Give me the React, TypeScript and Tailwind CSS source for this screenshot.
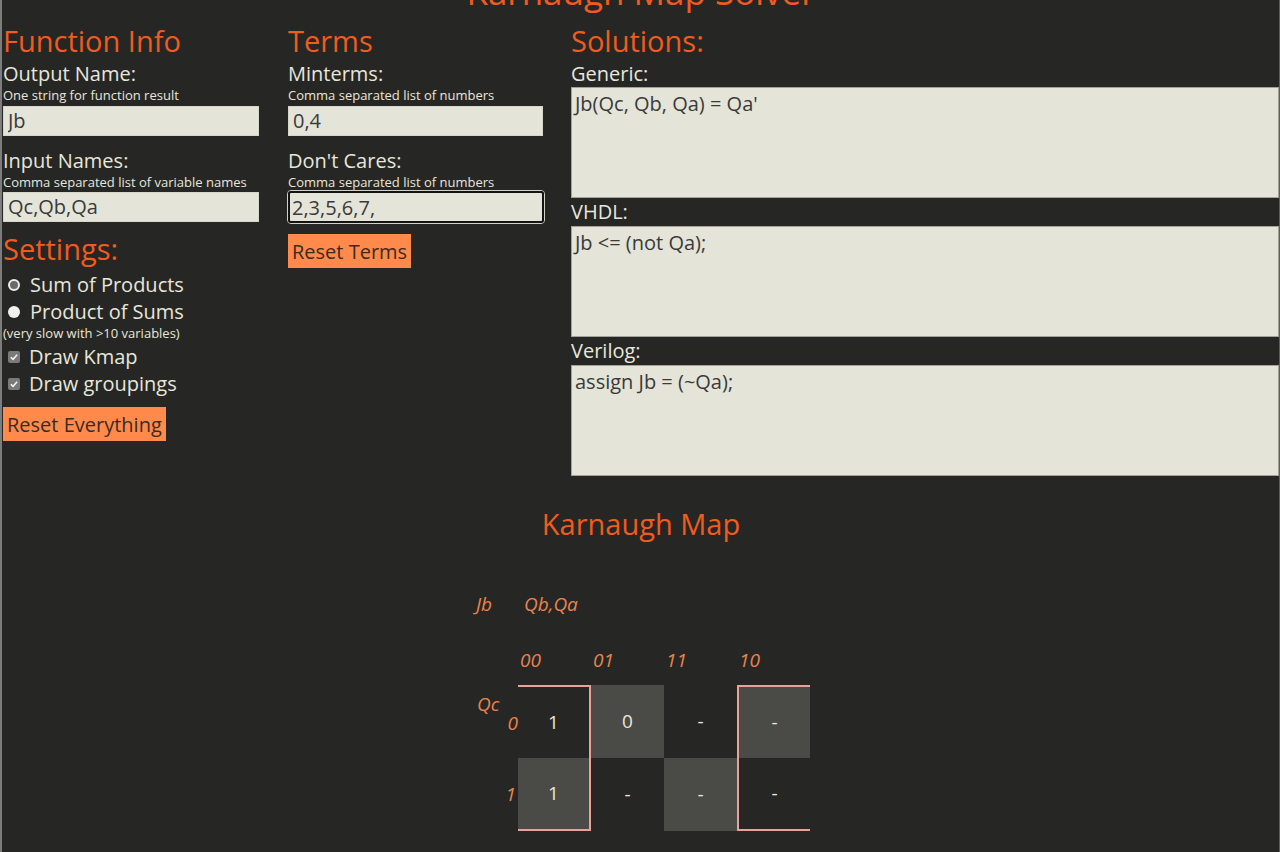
import React from 'react';

type Cell = { v: string; shade?: boolean; edge?: string };

const kmapRows: { label: string; cells: Cell[] }[] = [
  {
    label: '0',
    cells: [
      { v: '1', edge: 'border-t-2 border-r-2' },
      { v: '0', shade: true },
      { v: '-' },
      { v: '-', shade: true, edge: 'border-t-2 border-l-2' },
    ],
  },
  {
    label: '1',
    cells: [
      { v: '1', shade: true, edge: 'border-r-2 border-b-2' },
      { v: '-' },
      { v: '-', shade: true },
      { v: '-', edge: 'border-l-2 border-b-2' },
    ],
  },
];

function Heading({ children, className = '' }: { children: React.ReactNode; className?: string }) {
  return <h2 className={`text-[29px] leading-[38px] text-[#f15b1e] ${className}`}>{children}</h2>;
}

function Label({ children, className = '' }: { children: React.ReactNode; className?: string }) {
  return <div className={`text-[20px] leading-[27px] ${className}`}>{children}</div>;
}

function Hint({ children }: { children: React.ReactNode }) {
  return <div className="text-[13px] leading-[16px]">{children}</div>;
}

function TextBox({ value, width, className = '' }: { value: string; width: string; className?: string }) {
  return (
    <input
      readOnly
      value={value}
      className={`${width} h-[30px] border border-[#d6d6ca] bg-[#e4e4d8] px-[4px] text-[20px] text-[#3a3a3a] outline-none ${className}`}
    />
  );
}

function Button({ children, className = '' }: { children: React.ReactNode; className?: string }) {
  return (
    <button className={`h-[34px] bg-[#ff8a4c] px-[4px] text-[20px] leading-[27px] text-[#3b2a20] ${className}`}>
      {children}
    </button>
  );
}

function CheckRow({ label }: { label: string }) {
  return (
    <div className="flex items-center text-[20px] leading-[27px]">
      <span className="ml-[5px] mr-[9px] flex h-[12px] w-[12px] items-center justify-center rounded-[2px] bg-[#7a7a7a]">
        <svg viewBox="0 0 12 12" className="h-[10px] w-[10px]">
          <path d="M2.2 6.3 L4.8 8.8 L9.8 3.2" fill="none" stroke="#f4f4f4" strokeWidth="1.8" />
        </svg>
      </span>
      {label}
    </div>
  );
}

function Solution({ label, text, first }: { label: string; text: string; first?: boolean }) {
  return (
    <>
      <div className={`text-[20px] ${first ? 'leading-[27px]' : 'leading-[28px]'}`}>{label}</div>
      <textarea
        readOnly
        value={text}
        className="block h-[111px] w-full resize-none border border-[#a2a298] bg-[#e4e4d8] px-[3px] py-[2px] text-[20px] leading-[27px] text-[#3a3a3a] outline-none"
      />
    </>
  );
}

export default function App() {
  return (
    <div className="h-[852px] overflow-hidden border-l-2 border-r border-l-[#7c7c7c] border-r-[#5e5e5e] bg-[#262624] pl-[1px] font-['Open_Sans',sans-serif] text-[#e7e7dc]">
      <h1 className="-mt-[31px] text-center text-[35px] leading-[46px] text-[#f15b1e]">Karnaugh Map Solver</h1>

      <div className="mt-[7px] flex items-start">
        {/* Function info + settings */}
        <div className="w-[285px] shrink-0">
          <Heading>Function Info</Heading>
          <Label>Output Name:</Label>
          <Hint>One string for function result</Hint>
          <TextBox value="Jb" width="w-[256px]" className="mt-[3px]" />
          <Label className="mt-[11px]">Input Names:</Label>
          <Hint>Comma separated list of variable names</Hint>
          <TextBox value="Qc,Qb,Qa" width="w-[256px]" className="mt-[2px]" />

          <Heading className="mt-[8px]">Settings:</Heading>
          <div className="mt-[3px] flex items-center text-[20px] leading-[27px]">
            <span className="ml-[5px] mr-[10px] h-[12px] w-[12px] rounded-full border-2 border-[#ececec] bg-[#6a6a6a]" />
            Sum of Products
          </div>
          <div className="flex items-center text-[20px] leading-[27px]">
            <span className="ml-[5px] mr-[10px] h-[12px] w-[12px] rounded-full bg-[#f2f2f2]" />
            Product of Sums
          </div>
          <Hint>(very slow with &gt;10 variables)</Hint>
          <div className="mt-[2px]">
            <CheckRow label="Draw Kmap" />
            <CheckRow label="Draw groupings" />
          </div>
          <Button className="mt-[10px]">Reset Everything</Button>
        </div>

        {/* Terms */}
        <div className="w-[283px] shrink-0">
          <Heading>Terms</Heading>
          <Label>Minterms:</Label>
          <Hint>Comma separated list of numbers</Hint>
          <TextBox value="0,4" width="w-[255px]" className="mt-[3px]" />
          <Label className="mt-[11px]">Don't Cares:</Label>
          <Hint>Comma separated list of numbers</Hint>
          <div className="-ml-[1px] w-[258px] rounded-[4px] border border-[#d2d2c8]">
            <input
              readOnly
              value="2,3,5,6,7,"
              className="block h-[32px] w-full rounded-[3px] border-2 border-[#141414] bg-[#e4e4d8] px-[2px] text-[20px] text-[#3a3a3a] outline-none"
            />
          </div>
          <Button className="mt-[10px]">Reset Terms</Button>
        </div>

        {/* Solutions */}
        <div className="min-w-0 flex-1">
          <Heading>Solutions:</Heading>
          <Solution first label="Generic:" text="Jb(Qc, Qb, Qa) = Qa'" />
          <Solution label="VHDL:" text="Jb <= (not Qa);" />
          <Solution label="Verilog:" text="assign Jb = (~Qa);" />
        </div>
      </div>

      <Heading className="mt-[29px] text-center">Karnaugh Map</Heading>

      {/* Karnaugh map */}
      <div className="mx-auto w-[340px] text-[19px] italic text-[#e9834f]">
        <div className="mt-[49px] grid grid-cols-[47px_repeat(4,73px)] leading-[24px]">
          <span className="pl-[5px]">Jb</span>
          <span className="col-span-4 pl-[6px]">Qb,Qa</span>
        </div>
        <div className="mt-[32px] grid grid-cols-[47px_repeat(4,73px)] leading-[24px]">
          <span />
          {['00', '01', '11', '10'].map((h) => (
            <span key={h} className="pl-[2px]">
              {h}
            </span>
          ))}
        </div>
        <div className="mt-[13px] grid grid-cols-[47px_repeat(4,73px)]">
          {kmapRows.map((row, r) => (
            <React.Fragment key={row.label}>
              {r === 0 ? (
                <div className="flex h-[73px] flex-col pt-[10px] leading-[19px]">
                  <span className="pl-[6px]">Qc</span>
                  <span className="text-right">{row.label}</span>
                </div>
              ) : (
                <div className="flex h-[73px] items-center justify-end pr-[2px] leading-[19px]">{row.label}</div>
              )}
              {row.cells.map((c, i) => (
                <div
                  key={i}
                  className={`flex h-[73px] items-center justify-center border-[#e6a39b] not-italic text-[#e7e7dc] ${
                    c.shade ? 'bg-[#4a4a46]' : ''
                  } ${c.edge ?? ''}`}
                >
                  {c.v}
                </div>
              ))}
            </React.Fragment>
          ))}
        </div>
      </div>
    </div>
  );
}
